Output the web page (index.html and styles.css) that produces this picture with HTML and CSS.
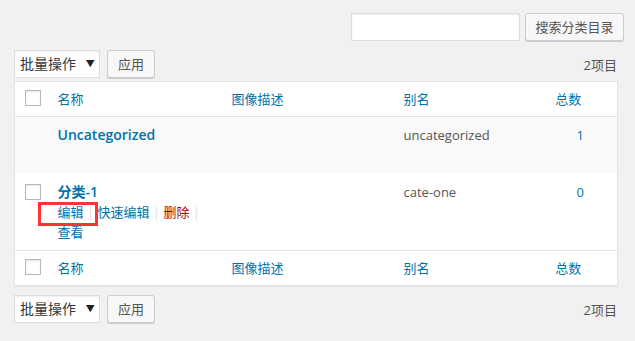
FILE: index.html
```html
<!DOCTYPE html>
<html lang="zh-CN">
<head>
    <meta charset="UTF-8">
    <title>分类目录</title>
    <link rel="stylesheet" href="styles.css">
</head>
<body>
<div class="wrap">
    <div class="search-box">
        <input type="search" class="search-input">
        <button class="button search-button">搜索分类目录</button>
    </div>

    <div class="tablenav">
        <div class="bulk">
            <div class="bulk-select">批量操作 <span class="caret">▼</span></div>
            <button class="button">应用</button>
        </div>
        <span class="num-items">2项目</span>
    </div>

    <table class="list-table">
        <colgroup>
            <col class="col-cb">
            <col class="col-name">
            <col class="col-desc">
            <col class="col-slug">
            <col class="col-count">
        </colgroup>
        <thead>
        <tr>
            <th class="check"><span class="checkbox"></span></th>
            <th><a href="#">名称</a></th>
            <th><a href="#">图像描述</a></th>
            <th><a href="#">别名</a></th>
            <th class="num"><a href="#">总数<span class="sort-ind"></span></a></th>
        </tr>
        </thead>
        <tbody>
        <tr class="alt">
            <td class="check"></td>
            <td>
                <a href="#" class="row-title">Uncategorized</a>
                <div class="row-actions hidden">&nbsp;</div>
            </td>
            <td></td>
            <td class="slug">uncategorized</td>
            <td class="num"><a href="#">1</a></td>
        </tr>
        <tr>
            <td class="check"><span class="checkbox"></span></td>
            <td>
                <a href="#" class="row-title">分类-1</a>
                <div class="row-actions">
                    <span class="edit"><a href="#">编辑</a> <span class="sep">|</span> </span><a href="#">快速编辑</a> <span class="sep">|</span> <a href="#" class="delete">删除</a> <span class="sep">|</span> <a href="#">查看</a>
                </div>
            </td>
            <td></td>
            <td class="slug">cate-one</td>
            <td class="num"><a href="#">0</a></td>
        </tr>
        </tbody>
        <tfoot>
        <tr>
            <th class="check"><span class="checkbox"></span></th>
            <th><a href="#">名称</a></th>
            <th><a href="#">图像描述</a></th>
            <th><a href="#">别名</a></th>
            <th class="num"><a href="#">总数<span class="sort-ind"></span></a></th>
        </tr>
        </tfoot>
    </table>

    <div class="tablenav bottom">
        <div class="bulk">
            <div class="bulk-select">批量操作 <span class="caret">▼</span></div>
            <button class="button">应用</button>
        </div>
        <span class="num-items">2项目</span>
    </div>
</div>
</body>
</html>
```

FILE: styles.css
```css
body {
    margin: 0;
    background: #f1f1f1;
    font-family: "Open Sans", "Noto Sans CJK SC", sans-serif;
    font-size: 13px;
    color: #444;
}

a {
    color: #0073aa;
    text-decoration: none;
}

.wrap {
    padding: 13px 18px 0 14px;
}

.search-box {
    display: flex;
    justify-content: flex-end;
    gap: 5px;
    margin-right: -7px;
}

.search-input {
    width: 169px;
    height: 28px;
    box-sizing: border-box;
    border: 1px solid #ddd;
    background: #fff;
    box-shadow: inset 0 1px 2px rgba(0, 0, 0, 0.07);
    margin: 0;
}

.button {
    height: 28px;
    box-sizing: border-box;
    padding: 0 10px;
    background: #f7f7f7;
    border: 1px solid #ccc;
    border-radius: 3px;
    box-shadow: 0 1px 0 #ccc;
    color: #555;
    font-family: "Open Sans", "Noto Sans CJK SC", sans-serif;
    font-size: 13px;
    line-height: 26px;
    margin: 0;
}

.search-button {
    width: 99px;
    padding: 0;
}

.tablenav {
    display: flex;
    justify-content: space-between;
    align-items: center;
    margin-top: 9px;
    height: 28px;
    margin-bottom: 3px;
}

.tablenav.bottom {
    margin-top: 9px;
}

.bulk {
    display: flex;
    gap: 7px;
}

.bulk-select {
    width: 86px;
    height: 28px;
    box-sizing: border-box;
    border: 1px solid #ddd;
    background: #fff;
    font-size: 14px;
    line-height: 26px;
    padding-left: 5px;
    color: #32373c;
    box-shadow: inset 0 1px 2px rgba(0, 0, 0, 0.07);
}

.caret {
    font-size: 9px;
    color: #222;
    margin-left: 6px;
    vertical-align: 2px;
}

.num-items {
    color: #555;
}

.list-table {
    width: 100%;
    table-layout: fixed;
    border-collapse: collapse;
    background: #fff;
    border: 1px solid #e5e5e5;
    box-shadow: 0 1px 1px rgba(0, 0, 0, 0.04);
}

.col-cb { width: 33px; }
.col-name { width: 174px; }
.col-desc { width: 172px; }
.col-slug { width: 150px; }
.col-count { width: 74px; }

.list-table th {
    font-weight: normal;
    text-align: left;
    padding: 8px 10px;
    line-height: 18px;
    font-size: 13px;
}

.list-table thead th {
    border-bottom: 1px solid #e1e1e1;
}

.list-table tfoot th {
    border-top: 1px solid #e1e1e1;
}

.list-table td {
    vertical-align: top;
    padding: 9px 10px 8px;
    line-height: 20px;
    color: #555;
}

.list-table tr.alt td {
    background: #f9f9f9;
    padding-top: 8px;
}

.list-table .check {
    padding: 8px 0 8px 10px;
    vertical-align: top;
}

.list-table td.check {
    padding-top: 11px;
}

.checkbox {
    display: block;
    width: 14px;
    height: 14px;
    border: 1px solid #b4b9be;
    background: #fff;
    box-shadow: inset 0 1px 2px rgba(0, 0, 0, 0.1);
}

.list-table .num {
    text-align: center;
}

.sort-ind {
    display: inline-block;
    width: 17px;
    margin-left: 7px;
}

.row-title {
    font-size: 14px;
    font-weight: 600;
}

.row-actions {
    position: relative;
    font-size: 13px;
}

.row-actions.hidden {
    visibility: hidden;
}

.row-actions .edit {
    position: relative;
}

.row-actions .edit::before {
    content: "";
    position: absolute;
    left: -20px;
    top: -1px;
    width: 54px;
    height: 18px;
    border: 3px solid #f33;
}

.sep {
    color: #ddd;
}

.delete {
    color: #a00;
}

.slug {
    color: #555;
}
```
